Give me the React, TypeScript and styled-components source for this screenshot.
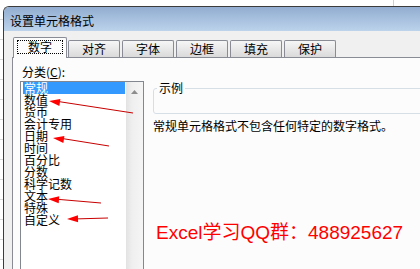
import React from 'react';
import styled, { createGlobalStyle } from 'styled-components';

const GlobalStyle = createGlobalStyle`
  html, body {
    margin: 0;
    padding: 0;
  }
  body {
    width: 420px;
    height: 269px;
    overflow: hidden;
    font-family: "Noto Sans CJK SC", "Liberation Sans", sans-serif;
    font-size: 12px;
    color: #000;
  }
`;

const StyledPage = styled.div`
  position: relative;
  width: 420px;
  height: 269px;
  box-sizing: border-box;
  overflow: hidden;
  padding: 6px 0 0 3px;
  background-color: #fff;
  background-image: linear-gradient(
      to right,
      transparent 393px,
      #d0d0d0 393px,
      #d0d0d0 394px,
      transparent 394px
    ),
    repeating-linear-gradient(to bottom, #fff 0 19px, #dadada 19px 20px);
`;

const StyledWindow = styled.div`
  height: 100%;
  display: flex;
  flex-direction: column;
  border-top: 1px solid #3c3c3c;
  border-left: 1px solid #3c3c3c;
  border-top-left-radius: 6px;
  background: #f0f0f0;
  overflow: hidden;
`;

const StyledTitleBar = styled.header`
  flex: none;
  box-sizing: border-box;
  height: 24px;
  display: flex;
  align-items: center;
  padding: 3px 0 0 6px;
  background: linear-gradient(#92add1, #bcd3eb);
  line-height: 12px;
`;

const StyledBody = styled.main`
  flex: 1;
  display: flex;
  flex-direction: column;
  padding: 6px 0 0 8px;
  min-height: 0;
`;

const StyledTabStrip = styled.nav`
  flex: none;
  position: relative;
  z-index: 1;
  height: 20px;
  display: flex;
  align-items: flex-end;
  gap: 2px;
  padding-left: 1px;
`;

const StyledTab = styled.div<{ active?: boolean }>`
  box-sizing: border-box;
  width: ${({ active }) => (active ? '54px' : '52px')};
  height: ${({ active }) => (active ? '21px' : '17px')};
  margin-bottom: ${({ active }) => (active ? '-1px' : '0')};
  margin-right: ${({ active }) => (active ? '-1px' : '0')};
  display: flex;
  align-items: center;
  justify-content: center;
  border: 1px solid #898c95;
  border-bottom: none;
  border-radius: 2px 2px 0 0;
  background: ${({ active }) => (active ? '#fcfcfc' : 'linear-gradient(#f6f6f6, #dadada)')};
  line-height: 12px;
  padding-bottom: ${({ active }) => (active ? '2px' : '0')};
`;

const StyledFocus = styled.span`
  border: 1px dotted #000;
  padding: 0 10px;
  line-height: 12px;
`;

const StyledPanel = styled.section`
  flex: 1;
  display: flex;
  min-height: 0;
  border-top: 1px solid #898c95;
  border-left: 1px solid #898c95;
  background: #fcfcfc;
`;

const StyledLeftColumn = styled.div`
  flex: none;
  display: flex;
  flex-direction: column;
  padding: 8px 0 0 7px;
`;

const StyledLabel = styled.label`
  margin-left: 2px;
  line-height: 12px;
  height: 12px;
  u {
    text-decoration: underline;
  }
`;

const StyledListBox = styled.div`
  margin-top: 3px;
  box-sizing: border-box;
  width: 124px;
  height: 200px;
  display: flex;
  border: 1px solid #828790;
  background: #fff;
`;

const StyledList = styled.ul`
  list-style: none;
  margin: 0;
  padding: 0 0 0 2px;
  width: 102px;
`;

const StyledItem = styled.li<{ selected?: boolean }>`
  height: 12px;
  line-height: 12px;
  padding-left: 1px;
  white-space: nowrap;
  background: ${({ selected }) => (selected ? '#3399ff' : 'transparent')};
  color: ${({ selected }) => (selected ? '#fff' : '#000')};
`;

const StyledScrollBar = styled.div`
  margin-left: auto;
  width: 17px;
  background: linear-gradient(to right, #e2e2e2, #efefef 35%, #f5f5f5);
`;

const StyledScrollButton = styled.div`
  height: 17px;
  display: flex;
  align-items: center;
  justify-content: center;
  padding-top: 2px;
  box-sizing: border-box;
`;

const StyledRightColumn = styled.div`
  flex: 1;
  display: flex;
  flex-direction: column;
  padding: 24px 0 0 9px;
  min-width: 0;
`;

const StyledGroup = styled.fieldset`
  margin: 0 -40px 0 0;
  padding: 0 3px;
  border: 1px solid #d5dfe5;
  border-radius: 3px;
  legend {
    padding: 0 2px;
    line-height: 12px;
    height: 12px;
  }
`;

const StyledGroupBody = styled.div`
  height: 19px;
`;

const StyledDescription = styled.p`
  margin: 6px 0 0;
  line-height: 12px;
  white-space: nowrap;
`;

const StyledPromo = styled.p`
  margin: 89px 0 0 3px;
  font-family: "Liberation Sans", "Noto Sans CJK SC", sans-serif;
  font-size: 19px;
  line-height: 24px;
  color: #ff0000;
  white-space: nowrap;
`;

const StyledOverlay = styled.svg`
  position: absolute;
  top: 0;
  left: 0;
  width: 420px;
  height: 269px;
  pointer-events: none;
`;

const tabs = ['数字', '对齐', '字体', '边框', '填充', '保护'];

const categories = [
  '常规',
  '数值',
  '货币',
  '会计专用',
  '日期',
  '时间',
  '百分比',
  '分数',
  '科学记数',
  '文本',
  '特殊',
  '自定义',
];

const arrows = [
  { tip: [49, 101], tail: [133, 113] },
  { tip: [53, 138], tail: [109, 146] },
  { tip: [48, 199], tail: [101, 203] },
  { tip: [67, 219], tail: [108, 218] },
];

const headPoints = (tip: number[], tail: number[]) => {
  const dx = tail[0] - tip[0];
  const dy = tail[1] - tip[1];
  const len = Math.hypot(dx, dy);
  const ux = dx / len;
  const uy = dy / len;
  const bx = tip[0] + ux * 11;
  const by = tip[1] + uy * 11;
  const w = 3.5;
  return `${tip[0]},${tip[1]} ${bx - uy * w},${by + ux * w} ${bx + uy * w},${by - ux * w}`;
};

const App: React.FC = () => (
  <StyledPage>
    <GlobalStyle />
    <StyledWindow>
      <StyledTitleBar>设置单元格格式</StyledTitleBar>
      <StyledBody>
        <StyledTabStrip>
          {tabs.map((tab, i) => (
            <StyledTab key={tab} active={i === 0}>
              {i === 0 ? <StyledFocus>{tab}</StyledFocus> : tab}
            </StyledTab>
          ))}
        </StyledTabStrip>
        <StyledPanel>
          <StyledLeftColumn>
            <StyledLabel>
              分类(<u>C</u>):
            </StyledLabel>
            <StyledListBox>
              <StyledList>
                {categories.map((c, i) => (
                  <StyledItem key={c} selected={i === 0}>
                    {c}
                  </StyledItem>
                ))}
              </StyledList>
              <StyledScrollBar>
                <StyledScrollButton>
                  <svg width="7" height="4" viewBox="0 0 7 4">
                    <polygon points="3.5,0 7,4 0,4" fill="#8d8d8d" />
                  </svg>
                </StyledScrollButton>
              </StyledScrollBar>
            </StyledListBox>
          </StyledLeftColumn>
          <StyledRightColumn>
            <StyledGroup>
              <legend>示例</legend>
              <StyledGroupBody />
            </StyledGroup>
            <StyledDescription>常规单元格格式不包含任何特定的数字格式。</StyledDescription>
            <StyledPromo>Excel学习QQ群：488925627</StyledPromo>
          </StyledRightColumn>
        </StyledPanel>
      </StyledBody>
    </StyledWindow>
    <StyledOverlay viewBox="0 0 420 269">
      {arrows.map((a, i) => (
        <g key={i}>
          <line x1={a.tip[0] + 6} y1={a.tip[1]} x2={a.tail[0]} y2={a.tail[1]} stroke="#c80000" strokeWidth="1" />
          <polygon points={headPoints(a.tip, a.tail)} fill="#ff0000" />
        </g>
      ))}
    </StyledOverlay>
  </StyledPage>
);

export default App;
